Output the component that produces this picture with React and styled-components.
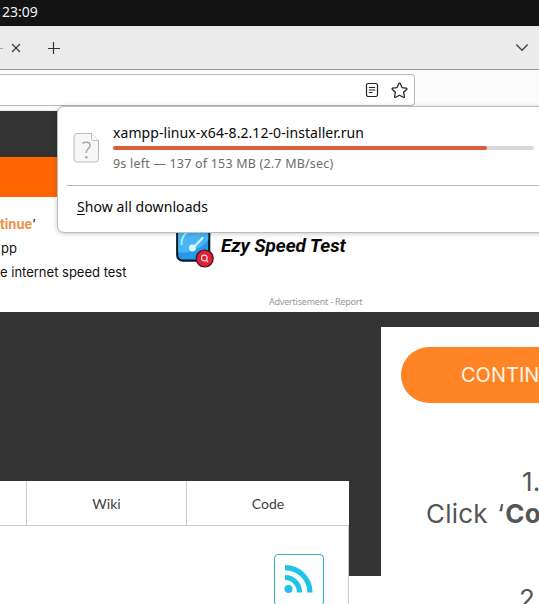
import React from "react";
import styled, { createGlobalStyle } from "styled-components";

const GlobalStyle = createGlobalStyle`
  * { box-sizing: border-box; }
  html, body { margin: 0; overflow: hidden; background: #fff; }
  svg { display: block; flex: none; }
`;

const Screen = styled.div`
  position: relative;
  display: flex;
  flex-direction: column;
  width: 539px;
  height: 604px;
  overflow: hidden;
  white-space: nowrap;
  font-family: "Noto Sans", sans-serif;
`;

const SystemBar = styled.header`
  height: 26px;
  flex: none;
  padding: 0 2px;
  background: #131313;
  color: #f2f2f2;
  font-size: 14px;
  line-height: 24px;
  letter-spacing: 0;
`;

const TabStrip = styled.div`
  display: flex;
  align-items: center;
  height: 44px;
  flex: none;
  padding: 2px 10px 1px 0;
  background: #ebebeb;
  border-bottom: 1px solid #999;
`;

const TabTitleEnd = styled.span`
  width: 3px;
  height: 1px;
  margin-right: 8px;
  background: #aaa;
`;

const Spacer = styled.span`
  flex: ${(p) => (p.$width ? `0 0 ${p.$width}px` : "1")};
`;

const Toolbar = styled.div`
  height: 41px;
  flex: none;
  padding-top: 4px;
  background: #fbfbfb;
  border-bottom: 1px solid #eee;
`;

const AddressBar = styled.div`
  display: flex;
  align-items: center;
  justify-content: flex-end;
  gap: 12px;
  width: 415px;
  height: 32px;
  padding-right: 6px;
  background: #fff;
  border: 1px solid #b8b8b8;
  border-left: 0;
  border-radius: 0 4px 4px 0;
`;

const Band = styled.div`
  flex: none;
  height: ${(p) => p.$height}px;
  background: ${(p) => p.$color};
`;

const AdSection = styled.section`
  display: flex;
  flex: none;
  height: 115px;
  background: #fff;
`;

const AdSteps = styled.div`
  display: flex;
  flex-direction: column;
  width: 176px;
  padding-top: 15px;
  font-family: Inter, sans-serif;
  font-size: 13px;
  line-height: 24px;
  color: #111;
`;

const AdStep = styled.div`
  padding-left: ${(p) => p.$indent || 0}px;
  b { color: #ee9045; font-weight: 700; }
`;

const AdBrand = styled.div`
  display: flex;
  flex-direction: column;
  padding-top: 28px;
`;

const BrandRow = styled.div`
  display: flex;
  height: 44px;
`;

const BrandName = styled.div`
  margin-left: 5px;
  font: italic 700 19px/42px Roboto, sans-serif;
  letter-spacing: -0.1px;
  color: #080808;
`;

const AdNote = styled.div`
  padding-left: 93px;
  margin-top: 25px;
  font-size: 9px;
  line-height: 16px;
  letter-spacing: -0.22px;
  color: #999;
`;

const Content = styled.main`
  display: flex;
  align-items: flex-start;
  flex: 1;
  background: linear-gradient(#333 264px, #fff 264px);
`;

const ProjectCard = styled.section`
  width: 349px;
  height: 123px;
  margin-top: 169px;
  background: #fff;
`;

const ProjectTabs = styled.nav`
  display: flex;
  height: 45px;
  border-bottom: 1px solid #ccc;
`;

const ProjectTab = styled.div`
  width: ${(p) => p.$width}px;
  border-right: ${(p) => (p.$last ? 0 : 1)}px solid #ccc;
  text-align: center;
  font: 14px/46px Lato, sans-serif;
  color: #404040;
`;

const ProjectBody = styled.div`
  display: flex;
  justify-content: flex-end;
  height: 78px;
  padding: 28px 24px 0 0;
  border-right: 1px solid #ccc;
`;

const FeedButton = styled.div`
  width: 50px;
  height: 52px;
  padding: 10px 9px;
  border: 1px solid #35a9c4;
  border-radius: 4px;
`;

const Sidebar = styled.aside`
  width: 158px;
  height: 277px;
  margin: 15px 0 0 32px;
  padding-top: 20px;
  overflow: hidden;
  background: #fff;
  color: #555;
  font-family: Inter, sans-serif;
`;

const ContinueButton = styled.div`
  width: 240px;
  height: 56px;
  margin-left: 20px;
  padding-left: 60px;
  border-radius: 28px;
  background: #ff8426;
  color: #fff5e8;
  font-size: 20px;
  line-height: 56px;
`;

const Instruction = styled.div`
  padding-left: ${(p) => p.$indent}px;
  margin-top: ${(p) => p.$gap || 0}px;
  font-size: 26px;
  line-height: 32px;
  letter-spacing: 0.2px;
  word-spacing: 2px;
  b { margin-left: 1px; }
`;

const DownloadPanel = styled.div`
  position: absolute;
  top: 106px;
  left: 57px;
  width: 500px;
  height: 127px;
  padding: 0 0 0 9px;
  border: 1px solid #bcbcbc;
  border-radius: 7px;
  background: #fff;
  box-shadow: 0 1px 5px rgba(0, 0, 0, 0.2);
`;

const DownloadRow = styled.div`
  display: flex;
  height: 79px;
  padding: 25px 0 0 6px;
  border-bottom: 1px solid #b8b8b8;
`;

const DownloadInfo = styled.div`
  width: 421px;
  margin: -9px 0 0 13px;
`;

const FileName = styled.div`
  font-size: 14px;
  line-height: 20px;
  letter-spacing: 0.07px;
  color: #080808;
`;

const ProgressTrack = styled.div`
  height: 4px;
  margin-top: 3px;
  border-radius: 2px;
  background: #d8d8d8;
`;

const ProgressFill = styled.div`
  width: 374px;
  height: 4px;
  border-radius: 2px;
  background: #d45f38;
`;

const FileStatus = styled.div`
  margin-top: 5px;
  font-size: 12.5px;
  line-height: 18px;
  letter-spacing: 0.2px;
  color: #6c6c6c;
`;

const ShowAll = styled.div`
  padding-left: 10px;
  font-size: 14px;
  line-height: 41px;
  letter-spacing: 0.08px;
  color: #080808;
  u { text-underline-offset: 2px; text-decoration-thickness: 1px; text-decoration-skip-ink: none; }
`;

const CloseIcon = () => (
  <svg width="10" height="10" viewBox="0 0 10 10" fill="none" stroke="#3b3b3b" strokeWidth="1.1">
    <path d="M1 1l8 8M9 1L1 9" />
  </svg>
);

const PlusIcon = () => (
  <svg width="12" height="12" viewBox="0 0 12 12" fill="none" stroke="#333" strokeWidth="1.2">
    <path d="M5.500 0v12M0 6.500h12" />
  </svg>
);

const ChevronIcon = () => (
  <svg width="14" height="10" viewBox="0 0 14 10" fill="none" stroke="#444" strokeWidth="1.4">
    <path d="M1.300 1.500L7 7.200l5.700-5.700" />
  </svg>
);

const ReaderIcon = () => (
  <svg width="14" height="16" viewBox="0 0 14 16" fill="none" stroke="#222" strokeWidth="1.2" strokeLinecap="round">
    <rect x="1.500" y="1.500" width="11" height="13" rx="1.800" />
    <path d="M4.300 5.500h5.400M4.300 8h5.400M4.300 10.500h2.800" />
  </svg>
);

const StarIcon = () => (
  <svg width="17" height="17" viewBox="0 0 17 17" fill="none" stroke="#222" strokeWidth="1.250" strokeLinejoin="round">
    <path d="M8.500 1.200c.4 0 .6.200.8.600l1.700 3.800 4.100.5c.9.100 1.100.800.500 1.400l-3 2.800.8 4.100c.2.900-.4 1.300-1.100.900l-3.800-2.100-3.800 2.100c-.7.400-1.300 0-1.100-.9l.8-4.100-3-2.800c-.6-.6-.4-1.300.5-1.400l4.100-.5 1.700-3.800c.2-.4.400-.6.800-.6z" />
  </svg>
);

const FileIcon = () => (
  <svg width="27" height="32" viewBox="0 0 27 32" fill="none">
    <path d="M4 1.500h14.500l7 7V27a3 3 0 0 1-3 3H4a3 3 0 0 1-3-3V4.500a3 3 0 0 1 3-3z" fill="#f7f7f7" stroke="#bcbcbc" />
    <path d="M18.500 1.500V6a2.500 2.500 0 0 0 2.500 2.500h4.500" fill="#fff" stroke="#bcbcbc" />
    <path d="M9.500 11.500c2-1.800 7.600-2 7.600 1.900 0 3.300-3.800 3.200-3.800 6.600v1" stroke="#aaa" strokeWidth="1.500" />
    <circle cx="13.300" cy="25.300" r="1.250" fill="#aaa" />
  </svg>
);

const SpeedIcon = () => (
  <svg width="40" height="44" viewBox="0 0 40 44" fill="none">
    <rect x="1.200" y="1.200" width="32" height="34.500" rx="5.500" fill="#249bea" stroke="#071a2b" strokeWidth="2.200" />
    <path d="M2.300 27c9 2 20-1 30-12V6a4 4 0 0 0-4-4H6a4 4 0 0 0-4 4z" fill="#49b5f3" />
    <path d="M5.500 20c0-14 11-17 18-12" stroke="#a9f1ff" strokeWidth="1.800" />
    <path d="M17 23L26.500 13" stroke="#c9faff" strokeWidth="2.200" strokeLinecap="round" />
    <circle cx="16.500" cy="23" r="3.400" fill="#ddfdff" />
    <circle cx="28.700" cy="33.500" r="8.500" fill="#df2036" stroke="#42101d" strokeWidth="1.200" />
    <circle cx="28.300" cy="33" r="2.800" stroke="#ffd5d5" strokeWidth="1.200" />
    <path d="M30 35l2 2" stroke="#ffd5d5" strokeWidth="1.200" />
  </svg>
);

const FeedIcon = () => (
  <svg width="30" height="30" viewBox="0 0 30 30" fill="none">
    <circle cx="4.500" cy="24" r="4" fill="#1fc3e8" />
    <path d="M1 12.500c8.500 0 14.500 7 14.500 15M1 2.700C15 2.700 26 14 26 27.500" stroke="#1fc3e8" strokeWidth="5.200" strokeLinejoin="round" />
  </svg>
);

export default function App() {
  return (
    <>
      <GlobalStyle />
      <Screen>
        <SystemBar>23:09</SystemBar>
        <TabStrip>
          <TabTitleEnd />
          <CloseIcon />
          <Spacer $width={27} />
          <PlusIcon />
          <Spacer />
          <ChevronIcon />
        </TabStrip>
        <Toolbar>
          <AddressBar>
            <ReaderIcon />
            <StarIcon />
          </AddressBar>
        </Toolbar>
        <Band $height={46} $color="#333" />
        <Band $height={40} $color="#ff6600" />
        <AdSection>
          <AdSteps>
            <AdStep><b>tinue</b>’</AdStep>
            <AdStep $indent={1}>pp</AdStep>
            <AdStep $indent={-4}>e internet speed test</AdStep>
          </AdSteps>
          <AdBrand>
            <BrandRow>
              <SpeedIcon />
              <BrandName>Ezy Speed Test</BrandName>
            </BrandRow>
            <AdNote>Advertisement - Report</AdNote>
          </AdBrand>
        </AdSection>
        <Content>
          <ProjectCard>
            <ProjectTabs>
              <ProjectTab $width={27} />
              <ProjectTab $width={160}>Wiki</ProjectTab>
              <ProjectTab $width={162} $last>Code</ProjectTab>
            </ProjectTabs>
            <ProjectBody>
              <FeedButton><FeedIcon /></FeedButton>
            </ProjectBody>
          </ProjectCard>
          <Sidebar>
            <ContinueButton>CONTINUE</ContinueButton>
            <Instruction $indent={141} $gap={63}>1.</Instruction>
            <Instruction $indent={45}>Click ‘<b>Continue</b>’</Instruction>
            <Instruction $indent={138} $gap={53}>2.</Instruction>
          </Sidebar>
        </Content>
        <DownloadPanel>
          <DownloadRow>
            <FileIcon />
            <DownloadInfo>
              <FileName>xampp-linux-x64-8.2.12-0-installer.run</FileName>
              <ProgressTrack><ProgressFill /></ProgressTrack>
              <FileStatus>9s left — 137 of 153 MB (2.7 MB/sec)</FileStatus>
            </DownloadInfo>
          </DownloadRow>
          <ShowAll><u>S</u>how all downloads</ShowAll>
        </DownloadPanel>
      </Screen>
    </>
  );
}
